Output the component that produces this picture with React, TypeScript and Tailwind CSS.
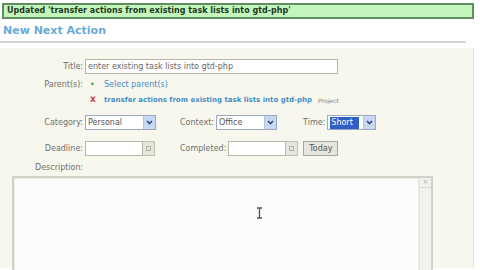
import React from 'react'

const font = { fontFamily: '"DejaVu Sans", Verdana, sans-serif' }

function Select({ value, width, selected }: { value: string; width: string; selected?: boolean }) {
  return (
    <div className={`flex h-[15px] items-stretch border border-[#9aa8c0] bg-white ${width}`}>
      <div className="flex flex-1 items-center pl-[2px]">
        <span className={selected ? 'bg-[#2f5fc4] px-[1px] pr-[6px] text-white' : 'text-[#555]'}>{value}</span>
      </div>
      <div className="flex w-[12px] items-center justify-center border-l border-[#b4c4e0] bg-[#c9d8f2]">
        <svg width="7" height="5" viewBox="0 0 7 5">
          <path d="M1 1 L3.5 3.5 L6 1" fill="none" stroke="#2b4a8a" strokeWidth="1.6" />
        </svg>
      </div>
    </div>
  )
}

function DateField({ width }: { width: string }) {
  return (
    <div className="flex h-[15px] items-stretch">
      <div className={`border border-[#b8b8a8] bg-white ${width}`} />
      <div className="flex w-[12px] items-center justify-center border border-l-0 border-[#c0c0b0] bg-[#e6e6dc]">
        <div className="h-[5px] w-[5px] border border-[#b0b0a0]" />
      </div>
    </div>
  )
}

export default function App() {
  return (
    <div className="h-[270px] w-[480px] overflow-hidden bg-white text-[8px] text-[#6f6f6a]" style={font}>
      <div className="ml-[2px] mt-[3px] flex h-[16px] w-[472px] items-center border-2 border-[#5e8f5e] bg-[#c4f5bd] pl-[3px] text-[8px] font-bold text-[#1d3b1d]">
        Updated 'transfer actions from existing task lists into gtd-php'
      </div>
      <div className="mt-[4px] pl-[3px] text-[11px] font-bold leading-[16px] text-[#6aaad6]">New Next Action</div>
      <div className="mt-[2px] h-[2px] w-[466px] bg-[#d6d6d2]" />
      <div className="mt-[5px] h-[220px] w-[474px] border-r border-[#e2e2d8] bg-[#f7f7ee] pt-[11px]">
        <div className="flex items-center">
          <div className="w-[85px] pr-[2px] text-right">Title:</div>
          <div className="flex h-[15px] w-[253px] items-center border border-[#b5b5a5] bg-white pl-[2px] text-[#666]">
            enter existing task lists into gtd-php
          </div>
        </div>
        <div className="mt-[4px] flex h-[14px] items-center">
          <div className="w-[85px] pr-[2px] text-right">Parent(s):</div>
          <span className="ml-[5px] w-[14px] text-[#3aa040]">•</span>
          <span className="text-[#3f8fc8]">Select parent(s)</span>
        </div>
        <div className="mt-[1px] flex h-[14px] items-center">
          <div className="w-[85px]" />
          <span className="ml-[5px] w-[14px] text-[7.5px] font-bold text-[#d03030]">X</span>
          <span className="text-[7px] font-bold text-[#3f8fc8]">transfer actions from existing task lists into gtd-php</span>
          <span className="ml-[6px] text-[6px] italic text-[#777]">Project</span>
        </div>
        <div className="mt-[8px] flex items-center">
          <div className="w-[85px] pr-[2px] text-right">Category:</div>
          <Select value="Personal" width="w-[71px]" />
          <div className="ml-[24px] pr-[2px]">Context:</div>
          <Select value="Office" width="w-[61px]" />
          <div className="ml-[26px] pr-[2px]">Time:</div>
          <Select value="Short" width="w-[49px]" selected />
        </div>
        <div className="mt-[11px] flex items-center">
          <div className="w-[85px] pr-[2px] text-right">Deadline:</div>
          <DateField width="w-[58px]" />
          <div className="ml-[25px] pr-[2px]">Completed:</div>
          <DateField width="w-[58px]" />
          <div className="ml-[5px] flex h-[15px] w-[35px] items-center justify-center border border-[#a8a8a0] bg-[#e6e6de] text-[#555]">
            Today
          </div>
        </div>
        <div className="mt-[7px] pl-[35px] leading-[10px]">Description:</div>
        <div className="ml-[12px] mt-[3px] flex h-[100px] w-[421px] border-2 border-[#d2d2c8] bg-[#fbfbf9]">
          <div className="relative flex-1 border border-[#ececE6]">
            <svg className="absolute left-[241px] top-[28px]" width="7" height="12" viewBox="0 0 7 12">
              <path d="M1 1 H6 M3.5 1 V11 M1 11 H6" fill="none" stroke="#555" strokeWidth="1.3" />
            </svg>
          </div>
          <div className="w-[12px] border-l border-[#e4e4dc] bg-[#f2f2ec]">
            <div className="flex h-[10px] items-center justify-center border-b border-[#d8d8d0] text-[7px] text-[#aaa]">×</div>
          </div>
        </div>
      </div>
    </div>
  )
}
